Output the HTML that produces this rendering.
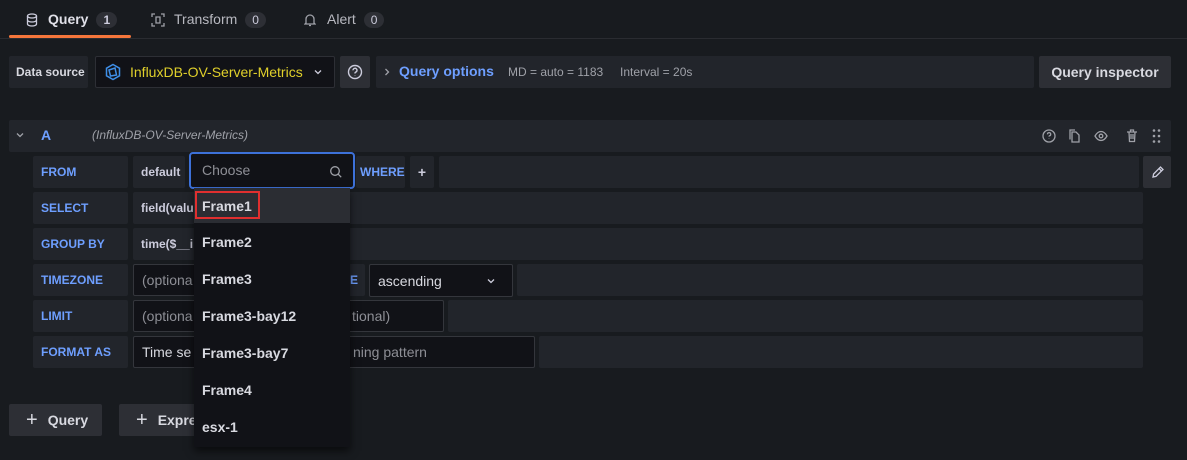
<!DOCTYPE html>
<html><head><style>
*{box-sizing:border-box;margin:0;padding:0}
body{width:1187px;height:460px;background:#181b1f;font-family:"Liberation Sans",sans-serif;font-size:14px;color:#ccccdc;position:relative;overflow:hidden}
.a{position:absolute}
.box{position:absolute;background:#22252b;border-radius:2px}
.lbl{color:#6e9fff;font-size:12px;font-weight:bold;display:flex;align-items:center;padding-left:8px}
.txt{display:flex;align-items:center}
.inp{position:absolute;background:#111217;border:1px solid #34363c;border-radius:2px;display:flex;align-items:center;padding-left:8px}
.badge{display:inline-block;background:#2d2f35;border-radius:10px;padding:1px 7px;font-size:12px;margin-left:8px;color:#ccccdc}
.dd div{height:37px;display:flex;align-items:center;padding-left:8px;font-weight:bold;color:#d8d9e0}
svg{position:absolute}
</style></head><body>
<div class="a" style="left:0;top:38px;width:1187px;height:1px;background:#2a2c31"></div>
<div class="a" style="left:9px;top:35px;width:122px;height:3px;background:#f5763b;border-radius:2px"></div>
<svg style="left:26px;top:13px" width="12" height="14" viewBox="0 0 12 14" fill="none" stroke="#ccccdc" stroke-width="1.3"><ellipse cx="6" cy="3" rx="4.5" ry="2"/><path d="M1.5 3v8c0 1.1 2 2 4.5 2s4.5-.9 4.5-2V3M1.5 7c0 1.1 2 2 4.5 2s4.5-.9 4.5-2"/></svg>
<div class="a" style="left:48px;top:11px;font-weight:bold;color:#e0e0e8">Query<span class="badge">1</span></div>
<svg style="left:151px;top:13px" width="14" height="14" viewBox="0 0 14 14" fill="none" stroke="#9fa1a8" stroke-width="1.3"><path d="M1 4V1h3M10 1h3v3M13 10v3h-3M4 13H1v-3M5 4h4v6H5z"/></svg>
<div class="a" style="left:174px;top:11px;color:#b8b9c0">Transform<span class="badge">0</span></div>
<svg style="left:304px;top:13px" width="12" height="14" viewBox="0 0 12 14" fill="none" stroke="#9fa1a8" stroke-width="1.3"><path d="M2 10V6a4 4 0 0 1 8 0v4l1 1H1zM5 12.5h2"/></svg>
<div class="a" style="left:327px;top:11px;color:#b8b9c0">Alert<span class="badge">0</span></div>
<div class="box txt" style="left:9px;top:56px;width:79px;height:32px;padding-left:7px;font-size:12px;font-weight:bold;color:#d8d9e0">Data source</div>
<div class="inp" style="left:95px;top:56px;width:240px;height:32px;border-color:#2d2f35;color:#e0d02b;font-size:14px;padding-left:34px">InfluxDB-OV-Server-Metrics</div>
<svg style="left:104px;top:63px" width="18" height="18" viewBox="0 0 18 18" fill="none" stroke="#3f8fe8" stroke-width="1.5"><path d="M9 1.5l6.5 3.7v7.6L9 16.5l-6.5-3.7V5.2zM5 7l6-2 1.5 7-6 1z"/></svg>
<svg style="left:313px;top:68px" width="10" height="8" viewBox="0 0 10 8" fill="none" stroke="#ccccdc" stroke-width="1.3"><path d="M2 2.5l3 3 3-3"/></svg>
<div class="box" style="left:340px;top:56px;width:30px;height:32px;background:#2d2f35"></div>
<svg style="left:347px;top:64px" width="16" height="16" viewBox="0 0 16 16" fill="none" stroke="#ccccdc" stroke-width="1.4"><circle cx="8" cy="8" r="6.5"/><path d="M6 6.3a2 2 0 1 1 2.5 1.9c-.4.2-.5.5-.5.9v.4M8 11.3v.3"/></svg>
<div class="box" style="left:376px;top:56px;width:658px;height:32px"></div>
<svg style="left:383px;top:67px" width="8" height="10" viewBox="0 0 8 10" fill="none" stroke="#9fa1a8" stroke-width="1.3"><path d="M2.5 2l3 3-3 3"/></svg>
<div class="a" style="left:399px;top:63px;color:#6e9fff;font-weight:bold">Query options</div>
<div class="a" style="left:508px;top:65px;font-size:12px;color:#9fa1a8">MD = auto = 1183</div>
<div class="a" style="left:620px;top:65px;font-size:12px;color:#9fa1a8">Interval = 20s</div>
<div class="box txt" style="left:1039px;top:56px;width:132px;height:32px;background:#2d2f35;justify-content:center;font-weight:bold;color:#d8d9e0">Query inspector</div>
<div class="box" style="left:9px;top:120px;width:1162px;height:32px"></div>
<svg style="left:15px;top:131px" width="10" height="8" viewBox="0 0 10 8" fill="none" stroke="#9fa1a8" stroke-width="1.3"><path d="M2 2.5l3 3 3-3"/></svg>
<div class="a" style="left:41px;top:127px;color:#6e9fff;font-weight:bold">A</div>
<div class="a" style="left:92px;top:128px;font-size:12px;font-style:italic;color:#9fa1a8">(InfluxDB-OV-Server-Metrics)</div>
<svg style="left:1040px;top:127px" width="125" height="18" viewBox="0 0 125 18" fill="none" stroke="#9fa1a8" stroke-width="1.3"><circle cx="9" cy="9" r="6"/><path d="M7.5 7.3a1.6 1.6 0 1 1 2 1.5c-.3.2-.5.4-.5.8M9 11.3v.3"/><path d="M32 5h4l3 3v7h-7zM30 12.5V3h5"/><path d="M55 9c2-3.5 4-4.5 6-4.5s4 1 6 4.5c-2 3.5-4 4.5-6 4.5s-4-1-6-4.5z"/><circle cx="61" cy="9" r="1.8"/><path d="M87 5h10M89 5l.5 9.5h5l.5-9.5M90.5 5V3h3v2M91 7v5M93 7v5"/><g fill="#9fa1a8" stroke="none"><circle cx="114" cy="3.5" r="1.3"/><circle cx="119" cy="3.5" r="1.3"/><circle cx="114" cy="9" r="1.3"/><circle cx="119" cy="9" r="1.3"/><circle cx="114" cy="14.5" r="1.3"/><circle cx="119" cy="14.5" r="1.3"/></g></svg>
<div class="box lbl" style="left:33px;top:156px;width:95px;height:32px">FROM</div>
<div class="box txt" style="left:133px;top:156px;width:52px;height:32px;padding-left:8px;font-size:12px;font-weight:bold">default</div>
<div class="a" style="left:189px;top:152px;width:166px;height:37px;border:2px solid #3d71d9;border-radius:4px;background:#111217"></div>
<div class="a" style="left:202px;top:162px;color:#8e8f96">Choose</div>
<svg style="left:329px;top:165px" width="14" height="14" viewBox="0 0 14 14" fill="none" stroke="#9fa1a8" stroke-width="1.3"><circle cx="6" cy="6" r="4.3"/><path d="M9.2 9.2l3 3"/></svg>
<div class="box lbl" style="left:356px;top:156px;width:49px;height:32px;padding-left:4px">WHERE</div>
<div class="box txt" style="left:410px;top:156px;width:24px;height:32px;justify-content:center;font-weight:bold">+</div>
<div class="box" style="left:439px;top:156px;width:700px;height:32px"></div>
<div class="box" style="left:1143px;top:156px;width:28px;height:32px;background:#2d2f35"></div>
<svg style="left:1150px;top:164px" width="16" height="16" viewBox="0 0 16 16" fill="none" stroke="#ccccdc" stroke-width="1.3"><path d="M3 13l.6-3L10.5 3l2.5 2.5L6 12.4zM9 4.5l2.5 2.5"/></svg>
<div class="box lbl" style="left:33px;top:192px;width:95px;height:32px">SELECT</div>
<div class="box txt" style="left:133px;top:192px;width:1010px;height:32px;padding-left:8px;font-size:12px;font-weight:bold">field(valu</div>
<div class="box lbl" style="left:33px;top:228px;width:95px;height:32px">GROUP BY</div>
<div class="box txt" style="left:133px;top:228px;width:1010px;height:32px;padding-left:8px;font-size:12px;font-weight:bold">time($__i</div>
<div class="box lbl" style="left:33px;top:264px;width:95px;height:32px">TIMEZONE</div>
<div class="inp" style="left:133px;top:264px;width:200px;height:32px;color:#8e8f96">(optiona</div>
<div class="box lbl" style="left:338px;top:264px;width:27px;height:32px;padding-left:12px">E</div>
<div class="inp" style="left:369px;top:264px;width:144px;height:33px;color:#d8d9e0">ascending</div>
<svg style="left:486px;top:277px" width="10" height="8" viewBox="0 0 10 8" fill="none" stroke="#ccccdc" stroke-width="1.3"><path d="M2 2.5l3 3 3-3"/></svg>
<div class="box" style="left:517px;top:264px;width:626px;height:32px"></div>
<div class="box lbl" style="left:33px;top:300px;width:95px;height:32px">LIMIT</div>
<div class="inp" style="left:133px;top:300px;width:311px;height:32px;color:#8e8f96">(optiona<span style="position:absolute;left:218px">tional)</span></div>
<div class="box" style="left:448px;top:300px;width:695px;height:32px"></div>
<div class="box lbl" style="left:33px;top:336px;width:95px;height:32px">FORMAT AS</div>
<div class="inp" style="left:133px;top:336px;width:402px;height:32px;color:#d8d9e0">Time se<span style="position:absolute;left:219px;color:#8e8f96">ning pattern</span></div>
<div class="box" style="left:539px;top:336px;width:604px;height:32px"></div>
<div class="box txt" style="left:9px;top:404px;width:93px;height:32px;background:#2d2f35;padding-left:17px;font-weight:bold;color:#d8d9e0"><span style="font-size:20px;font-weight:normal;margin-right:10px">+</span>Query</div>
<div class="box txt" style="left:119px;top:404px;width:120px;height:32px;background:#2d2f35;padding-left:17px;font-weight:bold;color:#d8d9e0"><span style="font-size:20px;font-weight:normal;margin-right:10px">+</span>Expression</div>
<div class="a dd" style="left:194px;top:188px;width:156px;height:259px;background:#111217;box-shadow:0 4px 8px rgba(0,0,0,.6)">
<div style="background:#2b2d33;height:35px">Frame1</div><div>Frame2</div><div>Frame3</div><div>Frame3-bay12</div><div>Frame3-bay7</div><div>Frame4</div><div>esx-1</div>
</div>
<div class="a" style="left:195px;top:191px;width:65px;height:28px;border:2px solid #e02f2f"></div>
</body></html>
